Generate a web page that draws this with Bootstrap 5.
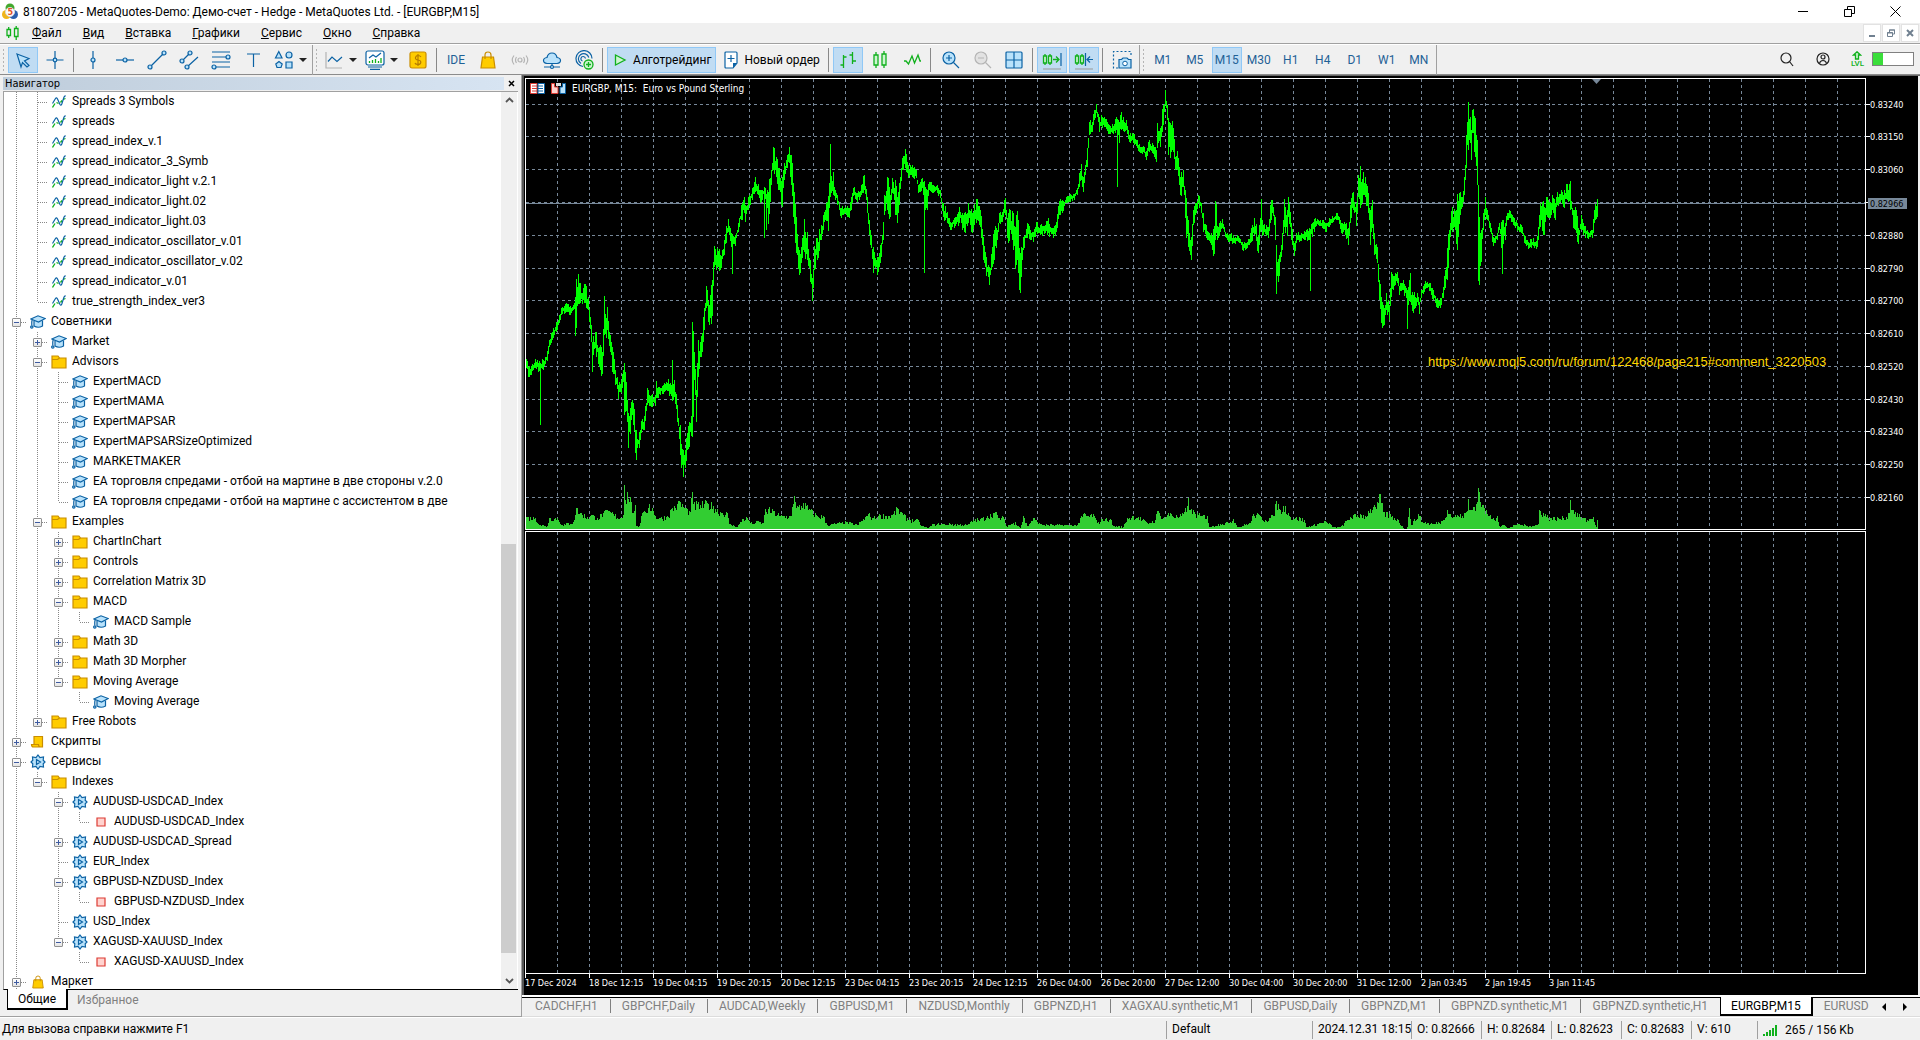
<!DOCTYPE html>
<html lang="ru">
<head>
    <meta charset="UTF-8">
    <meta name="viewport" content="width=device-width, initial-scale=1.0">
    <title>81807205 - MetaQuotes-Demo</title>
    <link href="https://cdn.jsdelivr.net/npm/bootstrap@5.3.0/dist/css/bootstrap.min.css" rel="stylesheet">
    <style>
        body {
            background-color: #f0f0f0;
            color: #000;
            font-family: Roboto, "Liberation Sans", sans-serif;
            font-size: 12px;
            line-height: 16px;
        }
        button {
            background: none;
            border: 0;
            padding: 0;
            color: inherit;
        }
        a {
            color: inherit;
            text-decoration: none;
        }
        svg {
            display: block;
            flex: none;
        }
        .blue { fill: none; stroke: #0b62a4; stroke-width: 1.2; }
        .sky { fill: #b9e2fb; stroke: #0b62a4; stroke-width: 1.2; }
        .green { fill: none; stroke: #10b01c; stroke-width: 1.3; }
        .mint { fill: #cdf5d0; stroke: #10b01c; stroke-width: 1.3; }
        .grey { fill: none; stroke: #b4b4b4; stroke-width: 1.2; }
        .gold { fill: #ffcc00; stroke: #c98d00; stroke-width: 1.2; }
        .rose { fill: #ffd3cf; stroke: #dc3b33; stroke-width: 1.2; }

        /* title and menu */
        .title-bar { height: 23px; background: #fff; padding: 0 2px; }
        .title-bar .caption { padding-left: 5px; padding-top: 1px; }
        .win-btn { width: 46px; height: 20px; }
        .menu-bar { height: 20px; padding-left: 6px; }
        .menu-bar .items { padding-left: 13px; gap: 21px; }
        .menu-bar .items a::first-letter { text-decoration: underline; }
        .mdi-btn { width: 18px; height: 18px; background: #fff; border: 1px solid #e2e2e2; margin-right: 1px; }

        /* toolbar */
        .tool-bar { height: 32px; border-top: 1px solid #a0a0a0; border-bottom: 1px solid #8c8c8c; box-shadow: inset 0 1px #fff; padding-top: 1px; }
        .tool-group { height: 30px; border-right: 1px solid #a0a0a0; padding-right: 1px; padding-left: 2px; }
        .grip { width: 3px; height: 24px; margin: 0 2px 0 0; background: radial-gradient(circle, #b4b4b4 1px, transparent 1px) 0 0 / 3px 4px; }
        .tool-btn { width: 30px; height: 26px; margin: 0 1px; border: 1px solid transparent; display: flex; align-items: center; justify-content: center; color: #1f6196; }
        .tool-btn.on { background: #c0dcf3; border-color: #90c8f6; }
        .tool-btn.drop { width: 40px; gap: 5px; }
        .tool-btn.wide { width: auto; color: #000; padding: 0 4px; gap: 5px; }
        .caret { border: 4px solid transparent; border-top-color: #222; border-bottom: 0; }
        .tool-sep { width: 1px; height: 24px; background: #888; margin: 0 3px 0 2px; }
        .tool-right { padding-right: 6px; }
        .battery { width: 42px; height: 14px; border: 1px solid #808080; background: #fff; }
        .battery i { display: block; width: 26%; height: 100%; background: #3ade3a; }
        .lvl { font-size: 8px; line-height: 8px; color: #10b01c; font-weight: 500; }

        /* navigator */
        .navigator { width: 522px; border-right: 1px solid #a0a0a0; padding: 2px 3px 0 3px; border-bottom: 1px solid #a0a0a0; }
        .nav-head { height: 13px; margin-bottom: 1px; font-family: "DejaVu Sans Condensed", sans-serif; font-size: 11px; line-height: 13px; }
        .nav-head span { background: linear-gradient(90deg, #bfcddb, #d7e4f2); padding-left: 2px; }
        .nav-head button { width: 14px; }
        .tree-box { background: #fff; border: 1px solid #a0a0a0; border-right: 0; border-bottom: 1px solid #000; }
        .tree { padding: 0 0 0 2px; }
        .tree li { height: 20px; }
        .tree li > span { padding-left: 3px; line-height: 19px; }
        .cell { width: 21px; height: 20px; flex: none; display: flex; align-items: center; justify-content: center; background-repeat: no-repeat; }
        .g-full { background-image: repeating-linear-gradient(#888 0 1px, transparent 1px 2px); background-size: 1px 20px; background-position: 10px 0; }
        .g-tee { background-image: repeating-linear-gradient(#888 0 1px, transparent 1px 2px), repeating-linear-gradient(90deg, #888 0 1px, transparent 1px 2px); background-size: 1px 20px, 10px 1px; background-position: 10px 0, 11px 10px; }
        .g-end { background-image: repeating-linear-gradient(#888 0 1px, transparent 1px 2px), repeating-linear-gradient(90deg, #888 0 1px, transparent 1px 2px); background-size: 1px 10px, 10px 1px; background-position: 10px 0, 11px 10px; }
        .expander { width: 9px; height: 9px; border: 1px solid #919191; border-radius: 1px; margin-top: 1px; background: linear-gradient(#3f5ba0, #3f5ba0) center / 5px 1px no-repeat, linear-gradient(#fff, #e4e4e4); }
        .expander.plus { background: linear-gradient(#3f5ba0, #3f5ba0) center / 5px 1px no-repeat, linear-gradient(#3f5ba0, #3f5ba0) center / 1px 5px no-repeat, linear-gradient(#fff, #e4e4e4); }
        .scroller { width: 16px; background: #f0f0f0; margin-right: 1px; }
        .scroller button { height: 17px; }
        .track-above { flex: 436 0 0; }
        .thumb { flex: 409 0 0; background: #cdcdcd; width: 15px; }
        .track-below { flex: 19 0 0; }
        .nav-tabs-row { height: 26px; padding-left: 4px; }
        .nav-tabs-row button { height: 20px; padding: 0 9px; color: #808080; }
        .nav-tabs-row button.on { background: #fff; border: 1px solid #000; border-width: 0 2px 2px 1px; margin-top: -1px; height: 21px; padding: 0 10px; color: #000; }

        /* charts */
        .workspace { border-top: 1px solid #666; }
        .chart-window { background: #000; border-left: 2px solid #555; padding: 2px 0 0 1px; margin-right: 2px; font-family: "DejaVu Sans Condensed", sans-serif; font-size: 9px; color: #fff; }
        .plot-row { flex: 453 0 0; margin-bottom: 1px; }
        .plot-row.sub { flex-grow: 443; margin-bottom: 0; }
        .plot { border: 1px solid #fff; }
        .scale { width: 52px; }
        .plot > svg, .scale > svg { width: 100%; height: 100%; position: absolute; inset: 0; }
        .scale > svg { overflow: visible; }
        svg text { font-family: "DejaVu Sans Condensed", sans-serif; font-size: 9px; fill: #fff; }
        svg text.note { font-family: "Liberation Sans", Arial, sans-serif; font-size: 13px; fill: #ffd700; }
        .chart-head { top: 4px; left: 4px; gap: 6px; font-size: 10px; line-height: 12px; }
        .time-axis { height: 21px; }
        .time-axis span { width: 64px; flex: none; white-space: nowrap; padding-top: 3px; line-height: 12px; background: linear-gradient(#fff, #fff) 0 0 / 1px 4px no-repeat; }
        .chart-tabs { height: 22px; border-top: 2px solid #fff; border-bottom: 1px solid #dcdcdc; background: linear-gradient(#000, #000) 0 0 / 100% 1px no-repeat; padding-left: 2px; color: #808080; }
        .chart-tabs a { padding: 0 12px 0 11px; height: 18px; line-height: 18px; flex: none; }
        .chart-tabs a + a:not(.on) { border-left: 1px solid #808080; height: 14px; line-height: 14px; margin: 2px 0; }
        .chart-tabs a.on { background: #fff; color: #000; border: 1px solid #000; border-width: 0 2px 2px 1px; height: 19px; padding: 0 10px; }
        .chart-tabs a.on + a:last-child { border-left: 0; padding-right: 0; }
        .chart-tabs button { width: 21px; }

        /* status */
        .status-bar { height: 23px; border-top: 1px solid #fff; padding-left: 2px; }
        .status-bar > div { line-height: 22px; white-space: nowrap; }
        .status-bar .st { border-left: 1px solid #a0a0a0; margin: 3px 0 1px; padding-left: 5px; line-height: 17px; }
        .st-profile { width: 146px; }
        .st-time { width: 99px; }
        .st-price { width: 70px; }
        .st-volume { width: 66px; }
        .st-net { width: 163px; }
    </style>
</head>
<body>
<svg width="0" height="0" class="position-absolute">
    <symbol id="i-chartline" viewBox="0 0 14 13"><path class="green" d="M.5 12.500 3 8.500M4.500 7.500 6.500 8.500M8.500 7.500 10 5.500M11 4.500 13.500 3.500"/><path class="blue" d="M.5 8.500 3.500 3.500Q4.500 2 5.500 4L8 9.500Q9 11 9.800 9L12 2 13.500.5"/></symbol>
    <symbol id="i-hat" viewBox="0 0 16 14"><path class="sky" d="M4 5.500V11q4 2.500 8.500 0V5.500"/><path class="sky" d="M.8 4 8 .8 15.200 3.500 8.500 7Z"/><path class="blue" d="M2.200 4.500Q1.500 7 1.800 10.500"/><circle class="sky" cx="1.800" cy="12" r="1.200"/></symbol>
    <symbol id="i-folder" viewBox="0 0 16 14"><path class="gold" d="M1 13V1h6l1.500 2H15v10Z"/><path class="gold" d="M1 4.500h5.500L8.500 3"/></symbol>
    <symbol id="i-gear" viewBox="0 0 16 16"><path class="sky" d="M8 1 10 3.500l3.500-.5-.3 3.300L15 8l-1.800 1.800.3 3.200-3.500-.5L8 15l-2-2.500-3.500.5.300-3.200L1 8l1.800-1.700L2.500 3 6 3.500Z"/><path class="blue" d="M6.500 5.500v5L10.500 8Z"/></symbol>
    <symbol id="i-stop" viewBox="0 0 16 16"><path class="rose" d="M4 4h8v8H4Z"/></symbol>
    <symbol id="i-script" viewBox="0 0 16 16"><path class="gold" d="M4 10.500V2.500h8.500V13H3.500Q1.500 13 1.500 10.500h7q0 2.500 2 2.500"/></symbol>
    <symbol id="i-bag" viewBox="0 0 16 18"><path class="gold" d="M2.500 6h11l1.500 11H1Z"/><path d="M5 8V4q0-3 3-3t3 3v4" fill="none" stroke="#c98d00" stroke-width="1.200"/></symbol>
</svg>

<div class="d-flex flex-column vh-100 overflow-hidden">
    <header class="title-bar d-flex align-items-center">
        <svg width="16" height="17" viewBox="0 0 16 17"><circle cx="4.500" cy="11.500" r="4.500" fill="#f0b51c"/><circle cx="11.500" cy="11.500" r="4.500" fill="#2a5fb0"/><circle cx="8" cy="5" r="4.500" fill="#43a82e"/><circle cx="8" cy="9" r="4.500" fill="#fff" stroke="#d9d9d9"/><text x="5.500" y="12" style="fill:#e2551f;font-weight:700">5</text></svg>
        <div class="caption flex-grow-1">81807205 - MetaQuotes-Demo: Демо-счет - Hedge - MetaQuotes Ltd. - [EURGBP,M15]</div>
        <button class="win-btn" aria-label="Свернуть"><svg class="mx-auto" width="10" height="10"><path d="M0 5.500h10" stroke="#000"/></svg></button>
        <button class="win-btn" aria-label="Восстановить"><svg class="mx-auto" width="11" height="11" fill="none" stroke="#000"><path d="M.5 3.500h7v7h-7ZM3.500 3V.5h7v7H8"/></svg></button>
        <button class="win-btn" aria-label="Закрыть"><svg class="mx-auto" width="11" height="11" stroke="#000"><path d="M.5.5l10 10M10.500.5l-10 10"/></svg></button>
    </header>

    <nav class="menu-bar d-flex align-items-center">
        <svg width="13" height="14" viewBox="0 0 13 14"><path class="green" d="M1 3.500h3.500v6H1ZM2.700 1v2.500M2.700 9.500V12M8.500 2.500H12v8H8.500ZM10.200 0v2.500M10.200 10.500V14"/></svg>
        <div class="items d-flex flex-grow-1">
            <a class="d-block" href="#">Файл</a><a class="d-block" href="#">Вид</a><a class="d-block" href="#">Вставка</a><a class="d-block" href="#">Графики</a><a class="d-block" href="#">Сервис</a><a class="d-block" href="#">Окно</a><a class="d-block" href="#">Справка</a>
        </div>
        <button class="mdi-btn" aria-label="Свернуть окно"><svg class="mx-auto" width="8" height="10"><path d="M1 8h6" stroke="#708090" stroke-width="2"/></svg></button>
        <button class="mdi-btn" aria-label="Восстановить окно"><svg class="mx-auto" width="8" height="8" fill="none" stroke="#708090"><path d="M.5 3.500h5v4h-5ZM0 4h6M2.500 3V1h5v4H6M2 1h6"/></svg></button>
        <button class="mdi-btn" aria-label="Закрыть окно"><svg class="mx-auto" width="8" height="8"><path d="M1 1l6 6M7 1 1 7" stroke="#708090" stroke-width="2"/></svg></button>
    </nav>

    <div class="tool-bar d-flex">
        <div class="tool-group d-flex align-items-center">
            <i class="grip"></i>
            <button class="tool-btn on" aria-label="Курсор"><svg width="20" height="20"><path class="sky" d="M4 4l12 4.500-4.500 2.500 4.500 4.500-2 1.500-4.500-4.500-1.500 4.500Z"/></svg></button>
            <button class="tool-btn" aria-label="Перекрестие"><svg width="20" height="20"><path class="blue" d="M10 1v18M1.500 10h17"/><circle class="sky" cx="10" cy="10" r="1.800"/></svg></button>
            <i class="tool-sep"></i>
            <button class="tool-btn" aria-label="Вертикальная линия"><svg width="20" height="20"><path class="blue" d="M10 1v18"/><circle class="sky" cx="10" cy="10" r="2"/></svg></button>
            <button class="tool-btn" aria-label="Горизонтальная линия"><svg width="20" height="20"><path class="blue" d="M1 10h18"/><circle class="sky" cx="10" cy="10" r="2"/></svg></button>
            <button class="tool-btn" aria-label="Трендовая линия"><svg width="20" height="20"><path class="blue" d="M3 17 17 3"/><circle class="sky" cx="3" cy="17" r="2"/><circle class="sky" cx="17" cy="3" r="2"/></svg></button>
            <button class="tool-btn" aria-label="Канал"><svg width="20" height="20"><path class="blue" d="M3 11l8-8M8 17 19 7"/><circle class="sky" cx="3" cy="11" r="2"/><circle class="sky" cx="11" cy="3" r="2"/><circle class="sky" cx="8" cy="17" r="2"/></svg></button>
            <button class="tool-btn" aria-label="Фибоначчи"><svg width="20" height="20"><path class="blue" d="M1 2h18M1 7h15M1 12h18M4 17h15"/><circle class="sky" cx="17" cy="7" r="2"/><circle class="sky" cx="3" cy="17" r="2"/></svg></button>
            <button class="tool-btn" aria-label="Текст"><svg width="20" height="20"><path class="blue" d="M4 4h13M10.500 4v13"/></svg></button>
            <button class="tool-btn drop" aria-label="Фигуры"><svg width="20" height="20"><path class="sky" d="M1.500 8h6.500L4.800 1.500ZM12 12h6v6h-6ZM5 11.500 1.800 14 3 17.500h4L8.200 14Z"/><circle class="sky" cx="15" cy="5" r="3"/></svg><i class="caret"></i></button>
        </div>
        <div class="tool-group d-flex align-items-center">
            <i class="grip"></i>
            <button class="tool-btn drop ms-0" aria-label="Тип графика"><svg width="20" height="20"><path class="grey" d="M2 2v16h16"/><path class="blue" d="M4 11.500 8 7l5 4.500L18 7"/></svg><i class="caret"></i></button>
            <button class="tool-btn drop ms-0" aria-label="Индикаторы"><svg width="20" height="20"><rect x="1" y="1" width="18" height="14" rx="2" fill="#fff" stroke="#0b62a4" stroke-width="1.200"/><path class="blue" d="M4 8l4-3 3 2 5-4M3 17h14M5 19.400h10"/><path class="green" d="M4.500 13v-2M7.500 13v-3M10.500 13V9M13.500 13v-2M16 13V8"/></svg><i class="caret"></i></button>
            <button class="tool-btn" aria-label="Символы"><svg width="18" height="18"><rect class="gold" x="1" y="1" width="16" height="16" rx="2"/><path d="M12 6q-1-1.500-3-1.500T6.500 6.500 9 9t2.800 2.300Q11.500 13.500 9 13.500T6 12M9 3v12" fill="none" stroke="#b57c00" stroke-width="1.200"/></svg></button>
            <i class="tool-sep"></i>
            <button class="tool-btn">IDE</button>
            <button class="tool-btn" aria-label="Маркет"><svg width="16" height="18"><use href="#i-bag"/></svg></button>
            <button class="tool-btn" aria-label="Сигналы"><svg width="20" height="20"><circle class="grey" cx="10" cy="10" r="2"/><path class="grey" d="M6.500 7q-2 3 0 6M13.500 7q2 3 0 6M4 5.500q-3.500 4.500 0 9M16 5.500q3.500 4.500 0 9"/></svg></button>
            <button class="tool-btn" aria-label="VPS"><svg width="20" height="20"><path class="sky" d="M5 13.500q-3.500-.5-3.500-3T5 7.500Q6 3 10 3t5 4.500q3.500.5 3.500 3T15 13.500Z"/><path class="blue" d="M2 17h16M10 13.500V17"/><circle class="sky" cx="10" cy="17" r="1.500"/></svg></button>
            <button class="tool-btn" aria-label="Сеть"><svg width="20" height="20"><path class="blue" d="M9 16.500a8 8 0 1 1 9-8M7 13.500a5.300 5.300 0 1 1 7.800-6M8.500 11a2.300 2.300 0 1 1 3-2.500"/><circle class="mint" cx="14.500" cy="14.500" r="4.500"/><path class="green" d="M12 14.500h5M14.500 12v5"/></svg></button>
            <i class="tool-sep"></i>
            <button class="tool-btn wide on"><svg width="16" height="16"><path class="mint" d="M3.500 3v10L13 8Z"/></svg><span>Алготрейдинг</span></button>
            <button class="tool-btn wide"><svg width="16" height="18"><path d="M3 1h10q1 0 1 1v10l-4 5H3q-1 0-1-1V2q0-1 1-1Z" fill="#fff" stroke="#0b62a4" stroke-width="1.200"/><path d="M10 17v-5h4Z" fill="#0b62a4"/><path class="blue" d="M8 4v7M4.500 7.500h7"/></svg><span>Новый ордер</span></button>
            <i class="tool-sep"></i>
            <button class="tool-btn on" aria-label="Бары"><svg width="20" height="20"><path class="green" d="M5.500 5v13M2.500 15h3M5.500 7h3M14.500 2v12M11.500 5h3M14.500 11H18"/></svg></button>
            <button class="tool-btn" aria-label="Свечи"><svg width="20" height="20"><path class="mint" d="M4 5h4v10H4ZM12 4h4v11h-4Z"/><path class="green" d="M6 2v3M6 15v3M14 1v3M14 15v3"/></svg></button>
            <button class="tool-btn" aria-label="Линия"><svg width="20" height="20"><path class="green" d="M2 11h2l2.500 3L10 6l2.500 7L16 5l2 6h1"/></svg></button>
            <i class="tool-sep"></i>
            <button class="tool-btn" aria-label="Увеличить"><svg width="20" height="20"><circle class="sky" cx="9" cy="8" r="6"/><path class="blue" d="M9 5v6M6 8h6M13.500 12.500 19 18"/></svg></button>
            <button class="tool-btn" aria-label="Уменьшить"><svg width="20" height="20"><circle cx="9" cy="8" r="6" fill="#e2e2e2" stroke="#b4b4b4" stroke-width="1.200"/><path class="grey" d="M6 8h6M13.500 12.500 19 18"/></svg></button>
            <button class="tool-btn" aria-label="Окна"><svg width="20" height="20"><rect class="sky" x="2" y="2" width="16" height="16" rx="1"/><path class="blue" d="M10 2v16M2 10h16"/></svg></button>
            <i class="tool-sep"></i>
            <button class="tool-btn on" aria-label="Автопрокрутка"><svg width="20" height="20"><path class="mint" d="M1.500 6h3v7h-3ZM6.500 6h3v7h-3Z"/><path class="green" d="M3 4v2M3 13v2M8 4v2M8 13v2M11 9.500h6M14 6.500l3 3-3 3"/><path class="blue" d="M19 3v13"/><path d="M1 19h18" stroke="#999"/></svg></button>
            <button class="tool-btn on" aria-label="Сдвиг"><svg width="20" height="20"><path class="mint" d="M1.500 6h3v7h-3ZM6.500 6h3v7h-3Z"/><path class="green" d="M3 4v2M3 13v2M8 4v2M8 13v2"/><path class="blue" d="M11.500 3v13M19 9.500h-5.500M16 6.500l-3 3 3 3"/><path d="M1 19h18" stroke="#999"/></svg></button>
            <i class="tool-sep"></i>
            <button class="tool-btn" aria-label="Снимок"><svg width="20" height="20"><path class="blue" d="M6 18H1.500V1.500H19V7" stroke-dasharray="2 2"/><path class="sky" d="M7 9.500h2.500L11 8h4l1.500 1.500H19V18H7Z"/><circle cx="13" cy="13.500" r="2.300" fill="#fff" stroke="#0b62a4"/></svg></button>
        </div>
        <div class="tool-group d-flex align-items-center" id="periods"><i class="grip"></i></div>
        <div class="tool-right ms-auto d-flex align-items-center">
            <button class="px-2" aria-label="Поиск"><svg width="16" height="16" fill="none" stroke="#222" stroke-width="1.200"><circle cx="7" cy="7" r="5"/><path d="M10.500 10.500 14 15"/></svg></button>
            <button class="px-2 ms-1" aria-label="Профиль"><svg width="16" height="16" fill="none" stroke="#222" stroke-width="1.200"><circle cx="8" cy="8" r="6"/><circle cx="8" cy="6" r="2"/><path d="M4.500 12.500Q5 9.500 8 9.500t3.500 3"/></svg></button>
            <button class="lvl px-2 ms-1"><svg class="mx-auto" width="10" height="9"><path class="mint" d="M5 .8 8.500 4H6.500v4h-3V4h-2Z"/></svg>LVL</button>
            <div class="battery"><i></i></div>
        </div>
    </div>

    <main class="d-flex flex-grow-1 overflow-hidden">
        <aside class="navigator d-flex flex-column flex-shrink-0">
            <div class="nav-head d-flex"><span class="flex-grow-1">Навигатор</span><button aria-label="Закрыть панель"><svg class="mx-auto" width="7" height="7"><path d="M1 1l5 5M6 1 1 6" stroke="#000" stroke-width="1.500"/></svg></button></div>
            <div class="tree-box d-flex flex-grow-1 overflow-hidden">
                <ul class="tree list-unstyled mb-0 flex-grow-1 overflow-hidden" id="tree"></ul>
                <div class="scroller d-flex flex-column">
                    <button aria-label="Вверх"><svg class="mx-auto" width="9" height="6"><path d="M1 5l3.500-3.500L8 5" fill="none" stroke="#555" stroke-width="1.800"/></svg></button>
                    <div class="track-above"></div>
                    <div class="thumb"></div>
                    <div class="track-below"></div>
                    <button aria-label="Вниз"><svg class="mx-auto" width="9" height="6"><path d="M1 1l3.500 3.500L8 1" fill="none" stroke="#555" stroke-width="1.800"/></svg></button>
                </div>
            </div>
            <div class="nav-tabs-row d-flex"><button class="on">Общие</button><button>Избранное</button></div>
        </aside>

        <section class="workspace d-flex flex-column flex-grow-1 overflow-hidden">
            <div class="chart-window d-flex flex-column flex-grow-1 overflow-hidden">
                <div class="plot-row d-flex">
                    <div class="plot flex-grow-1 position-relative overflow-hidden">
                        <svg id="plot"></svg>
                        <div class="chart-head position-absolute d-flex align-items-center">
                            <svg width="15" height="11"><path d="M.5.5H7v10H.5Z" fill="#fff" stroke="#dc3b33"/><path d="M8 .5h6.500v10H8Z" fill="#fff" stroke="#0b62a4"/><path d="M2 3h5M2 5.500h5M2 8h5" stroke="#dc3b33"/><path d="M8 3h5M8 5.500h5M8 8h5" stroke="#0b62a4"/></svg>
                            <svg width="15" height="11"><path d="M.5.5h3V4H7v6.500H.5Z" fill="#ffd3cf" stroke="#dc3b33"/><path d="M14.500.5h-3V4H9v6.500h5.500Z" fill="#b9e2fb" stroke="#0b62a4"/><path d="M5 0h5v3H5Z" fill="#ddd"/></svg>
                            <span>EURGBP, M15:&nbsp; Euro vs Pound Sterling</span>
                        </div>
                    </div>
                    <div class="scale position-relative"><svg id="scale"></svg></div>
                </div>
                <div class="plot-row sub d-flex">
                    <div class="plot flex-grow-1 position-relative overflow-hidden"><svg id="subplot"></svg></div>
                    <div class="scale"></div>
                </div>
                <div class="time-axis d-flex overflow-hidden" id="times"></div>
            </div>
            <nav class="chart-tabs d-flex">
                <div class="d-flex flex-grow-1 overflow-hidden" id="tabs"></div>
                <button aria-label="Назад"><svg class="mx-auto" width="5" height="8"><path d="M4 0v8L0 4Z"/></svg></button>
                <button class="me-1" aria-label="Вперед"><svg class="mx-auto" width="5" height="8"><path d="M0 0v8l4-4Z"/></svg></button>
            </nav>
        </section>
    </main>

    <footer class="status-bar d-flex">
        <div class="flex-grow-1">Для вызова справки нажмите F1</div>
        <div class="st st-profile">Default</div>
        <div class="st st-time">2024.12.31 18:15</div>
        <div class="st st-price">O: 0.82666</div>
        <div class="st st-price">H: 0.82684</div>
        <div class="st st-price">L: 0.82623</div>
        <div class="st st-price">C: 0.82683</div>
        <div class="st st-volume">V: 610</div>
        <div class="st st-net d-flex align-items-center gap-2"><svg width="14" height="11" stroke="#10b01c" stroke-width="2"><path d="M1 11V9M4 11V7M7 11V5M10 11V3M13 11V0"/></svg>265 / 156 Kb</div>
    </footer>
</div>

<script src="https://cdn.jsdelivr.net/npm/bootstrap@5.3.0/dist/js/bootstrap.bundle.min.js"></script>
<script>
    // periods
    const periods = ["M1", "M5", "M15", "M30", "H1", "H4", "D1", "W1", "MN"];
    document.getElementById("periods").insertAdjacentHTML("beforeend",
        periods.map(p => `<button class="tool-btn${p === "M15" ? " on" : ""}">${p}</button>`).join(""));

    // navigator tree: depth, expander (+, - or empty), icon, name
    const nodes = [
        [1, "", "chartline", "Spreads 3 Symbols"], [1, "", "chartline", "spreads"],
        [1, "", "chartline", "spread_index_v.1"], [1, "", "chartline", "spread_indicator_3_Symb"],
        [1, "", "chartline", "spread_indicator_light v.2.1"], [1, "", "chartline", "spread_indicator_light.02"],
        [1, "", "chartline", "spread_indicator_light.03"], [1, "", "chartline", "spread_indicator_oscillator_v.01"],
        [1, "", "chartline", "spread_indicator_oscillator_v.02"], [1, "", "chartline", "spread_indicator_v.01"],
        [1, "", "chartline", "true_strength_index_ver3"],
        [0, "-", "hat", "Советники"],
        [1, "+", "hat", "Market"], [1, "-", "folder", "Advisors"],
        [2, "", "hat", "ExpertMACD"], [2, "", "hat", "ExpertMAMA"], [2, "", "hat", "ExpertMAPSAR"],
        [2, "", "hat", "ExpertMAPSARSizeOptimized"], [2, "", "hat", "MARKETMAKER"],
        [2, "", "hat", "EA торговля спредами - отбой на мартине в две стороны v.2.0"],
        [2, "", "hat", "EA торговля спредами - отбой на мартине с ассистентом в две"],
        [1, "-", "folder", "Examples"],
        [2, "+", "folder", "ChartInChart"], [2, "+", "folder", "Controls"], [2, "+", "folder", "Correlation Matrix 3D"],
        [2, "-", "folder", "MACD"], [3, "", "hat", "MACD Sample"],
        [2, "+", "folder", "Math 3D"], [2, "+", "folder", "Math 3D Morpher"],
        [2, "-", "folder", "Moving Average"], [3, "", "hat", "Moving Average"],
        [1, "+", "folder", "Free Robots"],
        [0, "+", "script", "Скрипты"], [0, "-", "gear", "Сервисы"],
        [1, "-", "folder", "Indexes"],
        [2, "-", "gear", "AUDUSD-USDCAD_Index"], [3, "", "stop", "AUDUSD-USDCAD_Index"],
        [2, "+", "gear", "AUDUSD-USDCAD_Spread"], [2, "", "gear", "EUR_Index"],
        [2, "-", "gear", "GBPUSD-NZDUSD_Index"], [3, "", "stop", "GBPUSD-NZDUSD_Index"],
        [2, "", "gear", "USD_Index"],
        [2, "-", "gear", "XAGUSD-XAUUSD_Index"], [3, "", "stop", "XAGUSD-XAUUSD_Index"],
        [0, "+", "bag", "Маркет"]
    ];
    const sizes = { chartline: [14, 13], hat: [16, 14], folder: [16, 14], gear: [16, 16], stop: [16, 16], script: [16, 16], bag: [12, 14] };

    function hasNext(i, depth) {
        if (depth === 0) return true;
        for (let j = i + 1; j < nodes.length; j++) {
            if (nodes[j][0] < depth) return false;
            if (nodes[j][0] === depth) return true;
        }
        return false;
    }

    document.getElementById("tree").innerHTML = nodes.map(([depth, exp, icon, name], i) => {
        let cells = "";
        for (let d = 0; d < depth; d++) cells += `<i class="cell ${hasNext(i, d) ? "g-full" : ""}"></i>`;
        const box = exp ? `<button class="expander ${exp === "+" ? "plus" : ""}" aria-label="${name}"></button>` : "";
        cells += `<i class="cell ${hasNext(i, depth) ? "g-tee" : "g-end"}">${box}</i>`;
        const [w, h] = sizes[icon];
        return `<li class="d-flex text-nowrap">${cells}<i class="cell"><svg width="${w}" height="${h}"><use href="#i-${icon}"/></svg></i><span>${name}</span></li>`;
    }).join("");

    // chart tabs and time axis
    const tabs = ["CADCHF,H1", "GBPCHF,Daily", "AUDCAD,Weekly", "GBPUSD,M1", "NZDUSD,Monthly", "GBPNZD,H1", "XAGXAU.synthetic,M1",
        "GBPUSD,Daily", "GBPNZD,M1", "GBPNZD.synthetic,M1", "GBPNZD.synthetic,H1", "EURGBP,M15", "EURUSD"];
    document.getElementById("tabs").innerHTML =
        tabs.map(t => `<a href="#" class="${t === "EURGBP,M15" ? "on" : ""}">${t}</a>`).join("");
    const times = ["17 Dec 2024", "18 Dec 12:15", "19 Dec 04:15", "19 Dec 20:15", "20 Dec 12:15", "23 Dec 04:15", "23 Dec 20:15", "24 Dec 12:15",
        "26 Dec 04:00", "26 Dec 20:00", "27 Dec 12:00", "30 Dec 04:00", "30 Dec 20:00", "31 Dec 12:00", "2 Jan 03:45", "2 Jan 19:45", "3 Jan 11:45"];
    document.getElementById("times").innerHTML = times.map(t => `<span>${t}</span>`).join("");

    // price range: bar, high, low (one bar per pixel)
    const range = `0 279 288,2 287 297,5 286 295,9 279 288,13 281 291,17 280 290,21 271 281,23 260 267,27 248 258,31 242 250,35 228 235,40 223 232,44 226 235,48 223 229,
        52 194 224,56 213 224,59 204 223,62 217 230,65 245 262,66 262 292,69 252 268,70 252 277,73 267 287,76 272 294,78 216 255,80 238 258,81 227 250,84 255 272,86 267 292,
        89 290 305,92 305 319,95 300 313,97 290 302,98 283 335,101 320 342,102 333 368,105 322 340,107 323 345,110 350 380,113 352 368,115 341 353,118 336 350,121 308 325,
        125 315 327,129 315 326,130 301 318,134 308 315,138 303 312,142 299 311,146 308 321,148 300 317,151 325 342,154 345 375,157 370 397,159 370 388,161 353 370,165 336 356,
        166 242 357,168 272 300,170 310 342,172 260 297,176 253 272,178 228 250,180 206 228,183 225 245,186 200 236,188 166 187,191 168 187,195 176 188,198 160 175,200 146 163,
        202 139 152,205 153 167,209 155 166,212 143 152,215 125 140,218 117 133,219 125 142,223 115 125,226 108 120,229 97 112,232 104 115,234 110 123,238 107 115,242 112 144,
        245 90 105,247 67 90,250 77 97,253 88 110,256 97 127,258 83 100,261 75 88,263 67 83,265 75 105,267 103 137,270 137 173,273 170 195,276 158 178,278 139 172,281 152 180,
        284 180 202,286 198 221,288 166 190,291 158 180,295 145 160,298 132 142,301 122 141,304 98 117,307 100 115,311 115 125,315 128 138,319 127 133,323 128 138,326 113 123,
        328 107 115,331 113 122,335 105 115,338 95 110,341 117 133,344 150 165,347 167 193,351 177 195,354 165 183,357 142 160,358 115 135,361 97 130,364 115 137,366 98 113,
        369 100 135,371 117 143,373 103 125,376 78 90,379 69 88,382 85 98,386 85 97,390 90 98,392 105 113,396 98 108,399 107 130,401 110 130,403 102 110,407 105 113,411 105 113,
        414 110 118,417 123 137,421 132 143,424 142 150,429 137 146,433 127 143,438 133 152,442 123 143,446 133 153,451 119 140,454 130 147,457 157 180,460 177 196,463 187 205,
        466 167 187,468 150 180,471 150 160,473 133 143,476 132 142,479 118 135,482 133 163,484 130 150,487 133 170,490 135 185,492 140 193,494 173 213,497 157 170,501 143 158,
        504 150 160,507 152 162,510 142 152,514 145 155,519 145 153,522 138 153,527 148 158,530 142 152,533 121 135,537 121 131,540 117 123,544 114 122,548 114 120,551 108 115,
        553 93 107,555 84 100,557 97 112,559 85 95,561 68 87,563 42 55,566 42 52,568 30 40,570 24 33,573 37 52,576 37 48,579 39 47,583 45 54,587 46 54,590 37 50,593 42 63,
        595 32 50,598 42 52,600 40 50,603 55 62,607 54 63,611 60 68,614 67 73,618 67 73,620 71 80,623 60 72,627 65 74,630 70 82,631 43 68,634 48 67,637 25 45,639 10 25,641 25 40,
        642 38 75,644 43 78,647 48 72,649 77 90,651 71 90,654 97 115,657 90 107,659 110 138,660 118 158,662 140 167,665 157 180,667 130 145,670 123 133,672 115 123,675 123 133,
        677 133 152,681 151 160,685 153 165,687 150 175,689 121 160,692 147 158,696 139 148,699 152 157,703 154 162,707 155 163,712 156 162,716 162 170,721 162 168,724 153 163,
        728 138 155,732 155 173,735 119 150,737 145 155,742 147 158,744 125 143,746 120 133,749 137 160,750 165 214,753 175 196,756 153 170,758 119 147,761 130 156,762 117 137,
        765 143 160,768 163 176,770 153 163,774 155 161,779 152 160,783 148 160,786 143 157,789 138 147,794 140 146,799 143 152,803 138 147,811 133 140,815 143 153,818 142 150,
        822 148 165,824 125 143,827 112 130,830 123 146,832 95 117,834 86 128,837 92 115,839 97 117,842 113 133,844 130 165,846 120 148,848 153 175,851 167 183,853 200 220,
        855 217 243,856 222 248,858 228 245,860 213 230,863 225 240,865 192 217,868 196 206,871 192 203,873 206 215,877 200 210,881 210 225,883 200 220,887 215 233,891 213 222,
        893 222 234,895 210 218,899 201 209,903 203 211,906 208 219,911 218 228,914 218 228,917 207 218,919 190 208,921 168 200,923 150 170,925 131 150,929 131 150,931 117 165,
        934 112 135,936 117 127,938 97 115,940 55 88,942 22 70,945 50 80,946 30 53,949 38 77,951 60 105,952 105 201,955 150 182,957 133 150,959 117 135,961 130 140,964 143 152,
        967 157 166,971 153 160,973 143 150,975 142 168,979 143 160,981 133 140,984 131 138,987 137 145,991 143 151,995 145 153,998 155 163,1002 162 169,1007 158 166,
        1010 161 169,1012 147 160,1014 123 147,1018 127 155,1021 117 137,1024 122 138,1026 115 130,1029 123 140,1031 112 125,1036 112 124,1038 110 128,1041 104 120,
        1044 104 130,1047 130 148,1050 130 153,1052 148 164,1055 135 150,1057 143 155,1061 150 158,1066 150 158,1068 130 143,1071 119 137`;
    // single long bars: bar, high, low
    const spikes = [[14, 285, 345], [49, 223, 256], [50, 200, 248], [146, 281, 315], [206, 155, 194], [238, 115, 158], [240, 115, 150], [302, 120, 151], [304, 65, 110],
        [307, 93, 115], [398, 110, 193], [591, 45, 107], [784, 150, 211], [881, 218, 249], [884, 194, 215], [976, 145, 194], [931, 115, 170], [1044, 102, 125], [687, 150, 176]];
    // tick volume: bar, height
    const volume = `0 13,9 12,14 5,21 4,23 12,31 12,36 5,47 8,49 15,50 22,54 17,61 13,66 15,71 12,77 17,82 19,87 16,94 12,97 15,98 45,99 30,101 38,104 33,107 17,109 25,110 4,113 4,
        115 14,119 18,123 26,126 22,129 14,134 12,141 14,146 22,151 26,154 28,159 22,164 18,166 38,167 26,174 25,181 27,187 24,194 18,201 17,203 6,211 3,216 11,221 12,226 6,
        231 9,237 7,239 21,247 19,254 14,264 14,267 26,268 34,270 22,272 23,277 27,284 20,291 14,297 14,301 5,314 7,321 8,331 5,337 11,342 16,347 12,354 15,366 15,371 22,
        377 15,384 10,392 10,395 4,401 2,407 6,424 6,441 5,447 10,454 11,461 14,469 18,472 12,477 13,480 4,489 8,494 2,497 14,501 4,507 12,514 6,
        527 5,551 5,557 16,562 14,567 16,571 7,576 11,584 11,587 4,597 3,601 12,607 14,612 13,621 7,629 10,631 19,637 12,644 17,651 13,657 16,661 24,662 32,664 20,674 14,
        681 14,683 3,694 6,704 8,707 11,712 3,724 7,727 16,734 14,739 10,747 14,750 29,754 20,759 24,764 13,774 12,778 10,780 3,791 6,799 9,807 3,814 3,824 13,834 16,839 14,
        844 21,849 23,852 27,854 36,857 18,866 14,871 11,876 4,879 0,881 3,883 22,885 5,892 16,896 8,907 6,916 9,921 20,927 13,931 15,936 14,941 19,942 31,943 20,947 23,
        951 28,952 42,956 25,961 16,970 12,971 14,973 4,977 5,982 2,991 6,1007 4,1012 6,1013 20,1017 17,1024 12,1037 12,1043 17,1044 30,1047 20,1054 13,1061 10,1067 13,1070 3,1071 10`;

    const parse = s => s.split(",").map(p => p.trim().split(" ").map(Number)).sort((a, b) => a[0] - b[0]);
    // small fixed-seed generator, so that every redraw gives the same bars
    let seed = 7;
    const rnd = () => (seed = (seed * 16807) % 2147483647) / 2147483647;

    function eachBar(points, draw) {
        for (let k = 0; k < points.length - 1; k++) {
            const a = points[k], b = points[k + 1];
            for (let x = a[0]; x < b[0]; x++) {
                const t = (x - a[0]) / (b[0] - a[0]);
                draw(x, a.map((v, n) => v + (b[n] - v) * t), t === 0);
            }
        }
        const last = points[points.length - 1];
        draw(last[0], last, true);
    }

    const gridY = i => Math.round(24.7 + 32.77 * i);
    function verticals(w, h) {
        let d = "";
        for (let x = 31; x < w; x += 32) d += `M${x + 0.5} 0V${h}`;
        return d;
    }

    function drawCharts() {
        seed = 7;
        const plot = document.getElementById("plot"), sub = document.getElementById("subplot");
        const w = plot.clientWidth, h = plot.clientHeight;
        let rows = "", bars = "", vols = "", labels = "";
        for (let i = 0; i < 13; i++) {
            rows += `M0 ${gridY(i) + 0.5}H${w}`;
            labels += `<path d="M0 ${gridY(i) + 1.5}h4" stroke="#fff"/>`;
            if (i !== 3) labels += `<text x="4" y="${gridY(i) + 5}">${(0.8324 - i * 0.0009).toFixed(5)}</text>`;
        }
        eachBar(parse(range), (x, [, hi, lo], key) => {
            const s = (lo - hi) * 0.4;
            const top = Math.round(key ? hi : hi + (rnd() * 1.5 - 0.5) * s);
            const low = Math.round(key ? lo : lo - (rnd() * 1.5 - 0.5) * s);
            bars += `M${x + 0.5} ${Math.min(top, low - 3) + 1}V${low + 1}`;
        });
        spikes.forEach(([x, hi, lo]) => bars += `M${x + 0.5} ${hi}V${lo + 1}`);
        eachBar(parse(volume), (x, [, v], key) => {
            const n = Math.round(key ? v : v * (0.72 + rnd() * 0.42));
            if (n > 0) vols += `M${x + 0.5} ${h}v${-n}`;
        });
        plot.innerHTML = `
            <path d="${verticals(w, h)}${rows}" stroke="#778899" stroke-dasharray="3 3"/>
            <path d="M0 124.500H${w}" stroke="#778899"/>
            <path d="${vols}" stroke="#32cd32"/>
            <path d="${bars}" stroke="#00ff00"/>
            <path d="M1066 0h9l-4.500 5Z" fill="#778899"/>
            <text class="note" x="902" y="287">https://www.mql5.com/ru/forum/122468/page215#comment_3220503</text>`;
        document.getElementById("scale").innerHTML = labels +
            `<rect x="2" y="120" width="39" height="11" fill="#778899"/><text x="4" y="129" style="fill:#000">0.82966</text>`;
        sub.innerHTML = `<path d="${verticals(w, sub.clientHeight)}" stroke="#778899" stroke-dasharray="3 3"/>`;
    }
    drawCharts();
    window.addEventListener("resize", drawCharts);
</script>
</body>
</html>
